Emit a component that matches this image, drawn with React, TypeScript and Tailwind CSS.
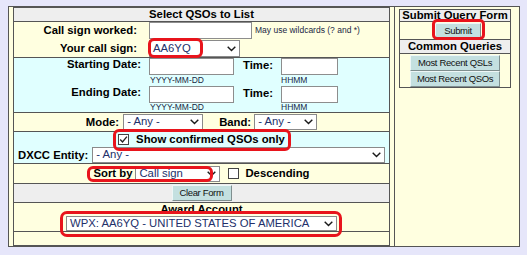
const font = "font-['Liberation_Sans',Arial,sans-serif]";

function Chevron() {
  return (
    <svg width="9" height="6" viewBox="0 0 9 6" className="shrink-0">
      <path d="M0.7 0.7L4.5 4.6L8.3 0.7" fill="none" stroke="#1a1a1a" strokeWidth="1.4" />
    </svg>
  );
}

function Select({ value, className }: { value: string; className: string }) {
  return (
    <div
      className={`flex items-center justify-between border border-[#8a8a8a] bg-white pl-[3px] pr-[3px] text-[11.3px] leading-none text-[#22306a] ${className}`}
    >
      <span className="whitespace-nowrap">{value}</span>
      <Chevron />
    </div>
  );
}

function Input({ className }: { className: string }) {
  return <div className={`border border-[#8d8d8d] bg-white ${className}`} />;
}

function Label({ children, className = "" }: { children: React.ReactNode; className?: string }) {
  return (
    <span className={`whitespace-nowrap text-[11.3px] font-bold leading-[13px] text-black ${className}`}>
      {children}
    </span>
  );
}

function Btn({ children, className }: { children: React.ReactNode; className: string }) {
  return (
    <div
      className={`flex items-center justify-center whitespace-nowrap border border-t-[#eef7f7] border-l-[#eef7f7] border-r-[#7f8f8f] border-b-[#7f8f8f] bg-[#c4e0e0] text-[9.5px] leading-none tracking-[-0.35px] text-[#111] ${className}`}
    >
      {children}
    </div>
  );
}

function Check({ checked }: { checked: boolean }) {
  return (
    <div className="flex h-[11px] w-[11px] shrink-0 items-center justify-center border border-[#444] bg-white">
      {checked && (
        <svg width="9" height="9" viewBox="0 0 9 9">
          <path d="M1.2 4.6L3.5 6.9L7.9 1.6" fill="none" stroke="#222" strokeWidth="1.4" />
        </svg>
      )}
    </div>
  );
}

function Hint({ children, className = "" }: { children: React.ReactNode; className?: string }) {
  return <span className={`whitespace-nowrap text-[8.5px] text-[#1a1f45] ${className}`}>{children}</span>;
}

export default function App() {
  return (
    <div className={`relative min-h-[255px] w-[527px] bg-[#e6e6fa] pl-[8px] pt-[6px] ${font}`}>
      <div className="flex h-[241px] w-[512px] border border-[#555] bg-[#ffffe0]">
        {/* left: query form */}
        <div className="ml-[4px] flex h-[239px] w-[377px] flex-col border border-[#555]">
          <div className="flex h-[14px] items-center justify-center border-b border-[#555] bg-[#eeeeee]">
            <Label>Select QSOs to List</Label>
          </div>

          <div className="flex h-[36px] flex-col border-b border-[#555] bg-[#ffffe0]">
            <div className="flex h-[17px] items-center">
              <Label className="w-[123px] text-right">Call sign worked:</Label>
              <Input className="ml-[12px] h-[17px] w-[103px]" />
              <Hint className="ml-[3px]">May use wildcards (? and *)</Hint>
            </div>
            <div className="mt-[1px] flex h-[17px] items-center">
              <Label className="w-[123px] text-right">Your call sign:</Label>
              <Select value="AA6YQ" className="ml-[12px] h-[17px] w-[91px]" />
            </div>
          </div>

          <div className="flex h-[55px] flex-col border-b border-[#555] bg-[#e0ffff]">
            <div className="flex h-[17px] items-start">
              <Label className="w-[127px] text-right">Starting Date:</Label>
              <Input className="ml-[8px] h-[17px] w-[85px]" />
              <Label className="ml-[9px] w-[38px] pt-[1px]">Time:</Label>
              <Input className="h-[17px] w-[57px]" />
            </div>
            <div className="flex h-[11px] items-center">
              <Hint className="ml-[136px] w-[131px]">YYYY-MM-DD</Hint>
              <Hint>HHMM</Hint>
            </div>
            <div className="flex h-[17px] items-start">
              <Label className="w-[127px] text-right">Ending Date:</Label>
              <Input className="ml-[8px] h-[17px] w-[85px]" />
              <Label className="ml-[9px] w-[38px] pt-[1px]">Time:</Label>
              <Input className="h-[17px] w-[57px]" />
            </div>
            <div className="flex h-[9px] items-center">
              <Hint className="ml-[136px] w-[131px]">YYYY-MM-DD</Hint>
              <Hint>HHMM</Hint>
            </div>
          </div>

          <div className="flex h-[19px] items-center justify-center border-b border-[#555] bg-[#ffffe0]">
            <Label>Mode:</Label>
            <Select value="- Any -" className="ml-[4px] h-[16px] w-[80px]" />
            <Label className="ml-[16px]">Band:</Label>
            <Select value="- Any -" className="ml-[3px] h-[16px] w-[63px]" />
          </div>

          <div className="flex h-[32px] flex-col border-b border-[#555] bg-[#e0ffff]">
            <div className="flex h-[15px] items-center justify-center">
              <Check checked />
              <Label className="ml-[7px]">Show confirmed QSOs only</Label>
            </div>
            <div className="flex h-[16px] items-center pl-[4px]">
              <Label>DXCC Entity:</Label>
              <Select value="- Any -" className="ml-[4px] h-[16px] w-[293px]" />
            </div>
          </div>

          <div className="flex h-[20px] items-center justify-center border-b border-[#555] bg-[#ffffe0]">
            <Label>Sort by</Label>
            <Select value="Call sign" className="ml-[3px] h-[16px] w-[85px]" />
            <div className="ml-[8px]">
              <Check checked={false} />
            </div>
            <Label className="ml-[6px]">Descending</Label>
          </div>

          <div className="flex h-[19px] items-center justify-center border-b border-[#555] bg-[#eeeeee]">
            <Btn className="h-[16px] w-[60px]">Clear Form</Btn>
          </div>

          <div className="flex h-[29px] flex-col items-center border-b border-[#555] bg-[#ffffe0]">
            <Label className="h-[12px] leading-[11px]">Award Account</Label>
            <Select value="WPX: AA6YQ - UNITED STATES OF AMERICA" className="mt-[1px] h-[15px] w-[271px]" />
          </div>

          <div className="h-[13px] bg-[#ffffe0]" />
        </div>

        {/* right: submit + shortcuts */}
        <div className="ml-[4px] flex-1 border-l border-[#555] pl-[4px] pt-[2px]">
          <div className="flex w-[112px] flex-col border border-[#555]">
            <div className="flex h-[12px] items-center justify-center border-b border-[#555] bg-[#eeeeee]">
              <Label className="leading-[11px]">Submit Query Form</Label>
            </div>
            <div className="flex h-[18px] items-center border-b border-[#555] bg-[#ffffe0]">
              <Btn className="ml-[35px] h-[15px] w-[46px]">Submit</Btn>
            </div>
            <div className="flex h-[14px] items-center justify-center border-b border-[#555] bg-[#eeeeee]">
              <Label>Common Queries</Label>
            </div>
            <div className="flex h-[33px] flex-col pl-[10px] pt-[1px]">
              <Btn className="h-[16px] w-[90px]">Most Recent QSLs</Btn>
              <Btn className="h-[16px] w-[90px]">Most Recent QSOs</Btn>
            </div>
          </div>
        </div>
      </div>

      {/* red highlight annotations */}
      <div className="absolute left-[148px] top-[38px] h-[20px] w-[55px] rounded-[6px] border-[3px] border-[#e8141c]" />
      <div className="absolute left-[113px] top-[129px] h-[22px] w-[178px] rounded-[6px] border-[3px] border-[#e8141c]" />
      <div className="absolute left-[87px] top-[166px] h-[16px] w-[126px] rounded-[6px] border-[3px] border-[#e8141c]" />
      <div className="absolute left-[60px] top-[211px] h-[26px] w-[282px] rounded-[7px] border-[3px] border-[#e8141c]" />
      <div className="absolute left-[432px] top-[19px] h-[21px] w-[53px] rounded-[5px] border-[3px] border-[#e8141c]" />
    </div>
  );
}
